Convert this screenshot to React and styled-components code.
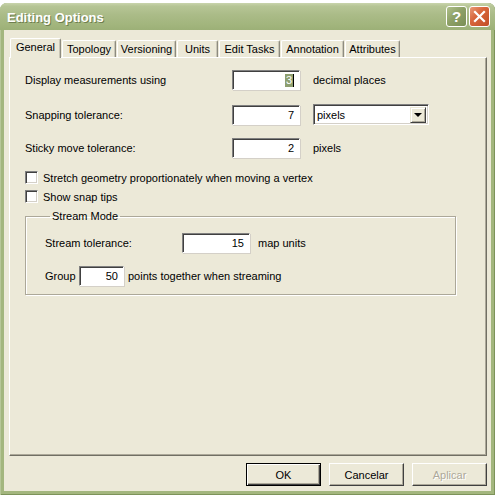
import React from 'react';
import styled, { createGlobalStyle } from 'styled-components';

const GlobalStyle = createGlobalStyle`
  html, body {
    margin: 0;
    padding: 0;
    background: #FFFFFF;
  }
  body {
    font-family: "Liberation Sans", Arial, sans-serif;
    font-size: 11px;
    color: #000000;
  }
`;

const Screen = styled.div`
    width: 496px;
    height: 495px;
    padding-top: 3px;
    box-sizing: border-box;
    background: #FFFFFF;
    overflow: hidden;
`;

const Window = styled.div`
    width: 495px;
    height: 492px;
    display: flex;
    flex-direction: column;
    border-radius: 7px 7px 0 0;
    background: #A3B67E;
    box-shadow: inset 1px 0 0 #B7C799, inset -1px 0 0 #7D935A, inset 0 -1px 0 #7D935A;
    overflow: hidden;
`;

const TitleBar = styled.div`
    height: 27px;
    flex-shrink: 0;
    display: flex;
    align-items: center;
    padding: 0 5px 0 7px;
    background: linear-gradient(to bottom, #C9D4AC 0%, #B6C595 12%, #AABB87 45%, #A2B57D 80%, #9CB077 100%);
`;

const Title = styled.div`
    flex: 1;
    color: #FFFFFF;
    font-family: "Liberation Sans", Arial, sans-serif;
    font-weight: bold;
    font-size: 13px;
    text-shadow: 1px 1px 0 #6F7F4E;
    padding-top: 1px;
`;

const CaptionButton = styled.div`
    width: 19px;
    height: 19px;
    margin-left: 2px;
    border: 1px solid #FFFFFF;
    border-radius: 3px;
    display: flex;
    align-items: center;
    justify-content: center;
    color: #FFFFFF;
    font-weight: bold;
    font-size: 15px;
    background: ${p => p.close
        ? 'linear-gradient(135deg, #E89A78 0%, #D8663C 40%, #C24E26 100%)'
        : 'linear-gradient(135deg, #AFC08A 0%, #8EA167 45%, #7A8E55 100%)'};
`;

const Client = styled.div`
    flex: 1;
    margin: 0 4px 4px 4px;
    background: #ECE9D8;
    display: flex;
    flex-direction: column;
`;

const TabStrip = styled.div`
    height: 27px;
    display: flex;
    align-items: flex-end;
    gap: 1px;
    padding-left: 6px;
    position: relative;
    z-index: 1;
`;

const Tab = styled.div`
    width: ${p => p.width}px;
    height: ${p => (p.active ? 20 : 17)}px;
    box-sizing: border-box;
    margin-bottom: ${p => (p.active ? -1 : 0)}px;
    background: #ECE9D8;
    border-top: 1px solid #FFFFFF;
    border-left: 1px solid #FFFFFF;
    border-right: 1px solid #8D8B80;
    border-radius: 2px 2px 0 0;
    box-shadow: inset -1px 0 0 #C9C6B6;
    display: flex;
    justify-content: center;
    padding-top: 2px;
    font-size: 11px;
`;

const Panel = styled.div`
    height: 399px;
    margin: 0 4px 0 5px;
    box-sizing: border-box;
    border-top: 1px solid #FFFFFF;
    border-left: 1px solid #FFFFFF;
    border-right: 1px solid #716F64;
    border-bottom: 1px solid #716F64;
    box-shadow: inset -1px -1px 0 #ACA899;
    padding: 12px 0 0 15px;
`;

const FieldRow = styled.div`
    display: grid;
    grid-template-columns: ${p => p.label}px ${p => p.input}px auto;
    column-gap: ${p => p.gap}px;
    align-items: center;
    height: 20px;
    margin-bottom: ${p => p.after}px;
`;

const Input = styled.div`
    height: 20px;
    box-sizing: border-box;
    background: #FFFFFF;
    border-top: 1px solid #808080;
    border-left: 1px solid #808080;
    border-right: 1px solid #FFFFFF;
    border-bottom: 1px solid #FFFFFF;
    box-shadow: inset 1px 1px 0 #404040, 1px 1px 0 #D4D0C8;
    display: flex;
    align-items: center;
    justify-content: flex-end;
    padding-right: 5px;
    font-size: 11px;
`;

const Selected = styled.span`
    background: #8E9F70;
    color: #FFFFFF;
    padding: 0 1px;
    line-height: 13px;
    border-right: 1px solid #000000;
`;

const Select = styled.div`
    width: 116px;
    height: 21px;
    box-sizing: border-box;
    background: #FFFFFF;
    border-top: 1px solid #808080;
    border-left: 1px solid #808080;
    border-right: 1px solid #FFFFFF;
    border-bottom: 1px solid #FFFFFF;
    box-shadow: inset 1px 1px 0 #404040, inset -1px -1px 0 #D4D0C8;
    display: flex;
    align-items: center;
    padding: 2px 2px 2px 3px;
`;

const SelectText = styled.div`
    flex: 1;
`;

const DropButton = styled.div`
    width: 16px;
    height: 16px;
    box-sizing: border-box;
    background: #ECE9D8;
    border-top: 1px solid #ECE9D8;
    border-left: 1px solid #ECE9D8;
    border-right: 1px solid #404040;
    border-bottom: 1px solid #404040;
    box-shadow: inset 1px 1px 0 #FFFFFF, inset -1px -1px 0 #ACA899;
    display: flex;
    align-items: center;
    justify-content: center;
`;

const Arrow = styled.div`
    width: 0;
    height: 0;
    border-left: 4px solid transparent;
    border-right: 4px solid transparent;
    border-top: 4px solid #000000;
`;

const CheckRow = styled.div`
    display: flex;
    align-items: center;
    gap: 5px;
    height: 13px;
    margin-top: ${p => p.top}px;
`;

const CheckBox = styled.div`
    width: 13px;
    height: 13px;
    box-sizing: border-box;
    background: #FFFFFF;
    border-top: 1px solid #808080;
    border-left: 1px solid #808080;
    border-right: 1px solid #FFFFFF;
    border-bottom: 1px solid #FFFFFF;
    box-shadow: inset 1px 1px 0 #404040, inset -1px -1px 0 #D4D0C8;
`;

const Group = styled.fieldset`
    width: 431px;
    box-sizing: border-box;
    margin: 7px 0 0 0;
    padding: 11px 0 8px 19px;
    border: 1px solid #ACA899;
    border-radius: 0;
    box-shadow: 1px 1px 0 #FFFFFF, inset 1px 1px 0 #FFFFFF;
`;

const Legend = styled.legend`
    margin-left: 5px;
    padding: 0 2px;
    font-size: 11px;
`;

const Footer = styled.div`
    display: flex;
    justify-content: flex-end;
    gap: 8px;
    padding: 7px 4px 0 0;
`;

const Button = styled.div`
    width: 75px;
    height: 23px;
    box-sizing: border-box;
    background: #ECE9D8;
    border: 1px solid ${p => (p.primary ? '#000000' : '#FFFFFF')};
    ${p => !p.primary && 'border-right-color: #404040; border-bottom-color: #404040;'}
    box-shadow: ${p => p.primary
        ? 'inset 1px 1px 0 #FFFFFF, inset -1px -1px 0 #404040, inset -2px -2px 0 #ACA899'
        : 'inset -1px -1px 0 #ACA899'};
    display: flex;
    align-items: center;
    justify-content: center;
    color: ${p => (p.disabled ? '#ACA899' : '#000000')};
    text-shadow: ${p => (p.disabled ? '1px 1px 0 #FFFFFF' : 'none')};
    font-size: 11px;
`;

const tabs = [
    { name: 'General', width: 51, active: true },
    { name: 'Topology', width: 54 },
    { name: 'Versioning', width: 59 },
    { name: 'Units', width: 41 },
    { name: 'Edit Tasks', width: 61 },
    { name: 'Annotation', width: 63 },
    { name: 'Attributes', width: 55 },
];

export default function App() {
    return (
        <Screen>
            <GlobalStyle />
            <Window>
                <TitleBar>
                    <Title>Editing Options</Title>
                    <CaptionButton>?</CaptionButton>
                    <CaptionButton close>
                        <svg width="13" height="13" viewBox="0 0 13 13">
                            <path d="M2 2 L11 11 M11 2 L2 11" stroke="#FFFFFF" strokeWidth="2.2" strokeLinecap="square" />
                        </svg>
                    </CaptionButton>
                </TitleBar>
                <Client>
                    <TabStrip>
                        {tabs.map(t => (
                            <Tab key={t.name} width={t.width} active={t.active}>{t.name}</Tab>
                        ))}
                    </TabStrip>
                    <Panel>
                        <FieldRow label={194} input={68} gap={13} after={14}>
                            <span>Display measurements using</span>
                            <Input><Selected>3</Selected></Input>
                            <span>decimal places</span>
                        </FieldRow>
                        <FieldRow label={194} input={68} gap={13} after={14}>
                            <span>Snapping tolerance:</span>
                            <Input>7</Input>
                            <Select>
                                <SelectText>pixels</SelectText>
                                <DropButton><Arrow /></DropButton>
                            </Select>
                        </FieldRow>
                        <FieldRow label={194} input={68} gap={13} after={0}>
                            <span>Sticky move tolerance:</span>
                            <Input>2</Input>
                            <span>pixels</span>
                        </FieldRow>
                        <CheckRow top={13}>
                            <CheckBox />
                            <span>Stretch geometry proportionately when moving a vertex</span>
                        </CheckRow>
                        <CheckRow top={6}>
                            <CheckBox />
                            <span>Show snap tips</span>
                        </CheckRow>
                        <Group>
                            <Legend>Stream Mode</Legend>
                            <FieldRow label={129} input={68} gap={8} after={13}>
                                <span>Stream tolerance:</span>
                                <Input>15</Input>
                                <span>map units</span>
                            </FieldRow>
                            <FieldRow label={30} input={45} gap={4} after={0}>
                                <span>Group</span>
                                <Input>50</Input>
                                <span>points together when streaming</span>
                            </FieldRow>
                        </Group>
                    </Panel>
                    <Footer>
                        <Button primary>OK</Button>
                        <Button>Cancelar</Button>
                        <Button disabled>Aplicar</Button>
                    </Footer>
                </Client>
            </Window>
        </Screen>
    );
}
